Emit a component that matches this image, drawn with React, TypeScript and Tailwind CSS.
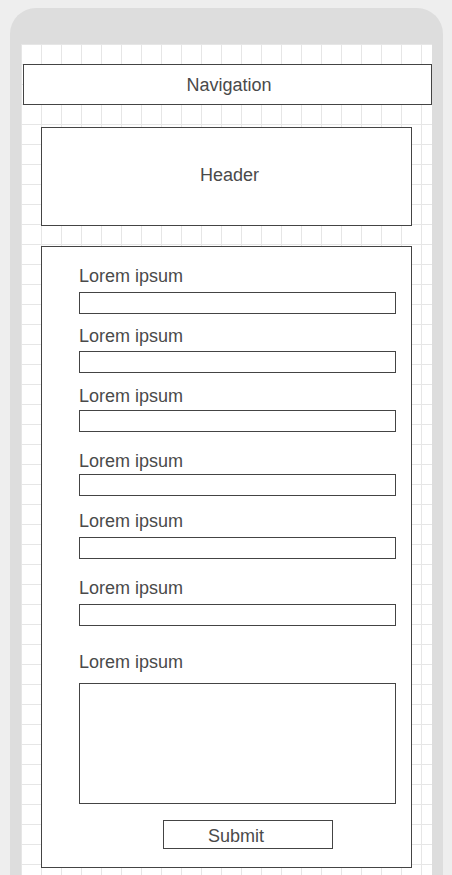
export default function App() {
  const rows = [
    { label: "mt-0", input: "mt-[6px]" },
    { label: "mt-[12px]", input: "mt-[5px]" },
    { label: "mt-[13px]", input: "mt-[4px]" },
    { label: "mt-[19px]", input: "mt-[3px]" },
    { label: "mt-[15px]", input: "mt-[6px]" },
    { label: "mt-[19px]", input: "mt-[6px]" },
  ];

  return (
    <div className="h-screen overflow-hidden bg-[#eeeeee] px-[10px] pt-[8px] font-['Liberation_Sans',Arial,sans-serif] text-[18px] text-[#4a4a4a]">
      {/* Phone frame */}
      <div className="h-full w-[433px] rounded-t-[26px] bg-[#dddddd] px-[11px] pt-[36px]">
        {/* Screen with grid */}
        <div className="h-full w-[411px] bg-white bg-[linear-gradient(to_right,#e6e6e6_1px,transparent_1px),linear-gradient(to_bottom,#e6e6e6_1px,transparent_1px)] bg-[size:20px_20px] pt-[20px]">
          <div className="ml-[2px] flex h-[41px] w-[409px] items-center justify-center border border-[#444444] bg-white pl-[3px] leading-[20px]">
            Navigation
          </div>

          <div className="ml-[20px] mt-[22px] flex h-[99px] w-[371px] items-center justify-center border border-[#444444] bg-white pb-[3px] pl-[6px] leading-[20px]">
            Header
          </div>

          {/* Form */}
          <div className="ml-[20px] mt-[20px] w-[371px] border border-[#444444] bg-white pb-[18px] pl-[37px] pr-[15px] pt-[19px]">
            {rows.map((row, i) => (
              <div key={i}>
                <div className={`${row.label} h-[20px] leading-[20px]`}>Lorem ipsum</div>
                <div className={`${row.input} h-[22px] w-[317px] border border-[#444444]`} />
              </div>
            ))}
            <div className="mt-[26px] h-[20px] leading-[20px]">Lorem ipsum</div>
            <div className="mt-[11px] h-[121px] w-[317px] border border-[#444444]" />
            <div className="ml-[84px] mt-[16px] flex h-[29px] w-[170px] items-center border border-[#444444] pl-[44px] pt-[2px] leading-[20px]">
              Submit
            </div>
          </div>
        </div>
      </div>
    </div>
  );
}
